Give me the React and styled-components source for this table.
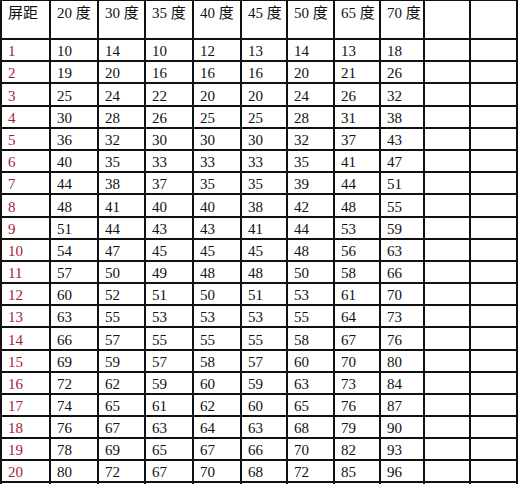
import React from "react";
import styled, { createGlobalStyle } from "styled-components";

const Global = createGlobalStyle`
  html, body { margin: 0; padding: 0; background: #fff; }
  body { font-family: "Liberation Serif", "Noto Sans CJK SC", serif; }
`;

const colWidths = [49, 48, 47, 48, 48, 46, 47, 46, 44, 46, 47];
const rowHeights = [39, 22, 22, 23, 22, 22, 22, 22, 23, 22, 22, 22, 22, 22, 23, 22, 22, 22, 22, 22, 22, 22];

const Grid = styled.div`
  display: grid;
  grid-template-columns: ${colWidths.map((w) => w + "px").join(" ")};
  grid-template-rows: ${rowHeights.map((h) => h + "px").join(" ")};
  width: max-content;
  border-left: 2px solid #111;
  border-top: 1px solid #111;
`;

const Cell = styled.div`
  box-sizing: border-box;
  border-right: 2px solid #111;
  border-bottom: 2px solid #111;
  padding-left: 6px;
  display: flex;
  align-items: ${(p) => (p.$head ? "flex-start" : "center")};
  padding-top: ${(p) => (p.$head ? "4px" : "2px")};
  font-size: 15px;
  line-height: 16px;
  color: ${(p) => (p.$red ? "#a51d30" : "#111")};
  white-space: nowrap;
  overflow: hidden;
`;

const HeadText = styled.span`
  font-family: "Liberation Serif", "Noto Sans CJK SC", serif;
`;

const headers = ["屏距", "20 度", "30 度", "35 度", "40 度", "45 度", "50 度", "65 度", "70 度", "", ""];

const data = [
  [10, 14, 10, 12, 13, 14, 13, 18],
  [19, 20, 16, 16, 16, 20, 21, 26],
  [25, 24, 22, 20, 20, 24, 26, 32],
  [30, 28, 26, 25, 25, 28, 31, 38],
  [36, 32, 30, 30, 30, 32, 37, 43],
  [40, 35, 33, 33, 33, 35, 41, 47],
  [44, 38, 37, 35, 35, 39, 44, 51],
  [48, 41, 40, 40, 38, 42, 48, 55],
  [51, 44, 43, 43, 41, 44, 53, 59],
  [54, 47, 45, 45, 45, 48, 56, 63],
  [57, 50, 49, 48, 48, 50, 58, 66],
  [60, 52, 51, 50, 51, 53, 61, 70],
  [63, 55, 53, 53, 53, 55, 64, 73],
  [66, 57, 55, 55, 55, 58, 67, 76],
  [69, 59, 57, 58, 57, 60, 70, 80],
  [72, 62, 59, 60, 59, 63, 73, 84],
  [74, 65, 61, 62, 60, 65, 76, 87],
  [76, 67, 63, 64, 63, 68, 79, 90],
  [78, 69, 65, 67, 66, 70, 82, 93],
  [80, 72, 67, 70, 68, 72, 85, 96],
];

export default function App() {
  return (
    <>
      <Global />
      <Grid>
        {headers.map((h, i) => (
          <Cell key={"h" + i} $head>
            <HeadText>{h}</HeadText>
          </Cell>
        ))}
        {data.map((row, r) => (
          <React.Fragment key={r}>
            <Cell $red>{r + 1}</Cell>
            {row.map((v, c) => (
              <Cell key={c}>{v}</Cell>
            ))}
            <Cell />
            <Cell />
          </React.Fragment>
        ))}
        {Array.from({ length: 11 }).map((_, i) => (
          <Cell key={"e" + i} />
        ))}
      </Grid>
    </>
  );
}
